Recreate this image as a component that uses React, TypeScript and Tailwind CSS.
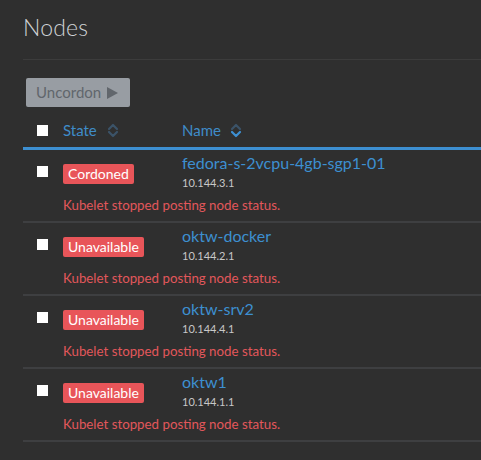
import { useState } from "react";

type Node = {
  name: string;
  ip: string;
  state: "Cordoned" | "Unavailable";
  message: string;
};

const nodes: Node[] = [
  { name: "fedora-s-2vcpu-4gb-sgp1-01", ip: "10.144.3.1", state: "Cordoned", message: "Kubelet stopped posting node status." },
  { name: "oktw-docker", ip: "10.144.2.1", state: "Unavailable", message: "Kubelet stopped posting node status." },
  { name: "oktw-srv2", ip: "10.144.4.1", state: "Unavailable", message: "Kubelet stopped posting node status." },
  { name: "oktw1", ip: "10.144.1.1", state: "Unavailable", message: "Kubelet stopped posting node status." },
];

// up/down chevrons; `active` lights one of them
function SortIcon({ active }: { active?: "up" | "down" }) {
  const dim = "#3b5368";
  const lit = "#3d8fd1";
  return (
    <svg width="12" height="15" viewBox="0 0 12 15" className="shrink-0">
      <path d="M2 6 L6 2 L10 6" fill="none" stroke={active === "up" ? lit : dim} strokeWidth="2.2" strokeLinecap="round" strokeLinejoin="round" />
      <path d="M2 9 L6 13 L10 9" fill="none" stroke={active === "down" ? lit : dim} strokeWidth="2.2" strokeLinecap="round" strokeLinejoin="round" />
    </svg>
  );
}

function Box() {
  return <span className="block w-[11px] h-[11px] bg-white" />;
}

export default function App() {
  const [rows] = useState(nodes);

  return (
    <div className="min-h-[460px] bg-[#2f2f2f] pl-[23px] pt-[12px] overflow-hidden" style={{ fontFamily: "Lato, 'Noto Sans', sans-serif" }}>
      <h1 className="text-[23px] leading-[30px] font-light text-[#d0d3d6] tracking-[0.2px]">Nodes</h1>
      <div className="mt-[17px] h-[1px] bg-[#3c3c3c]" />

      {/* bulk actions */}
      <div className="pt-[18px] pl-[3px]">
        <button type="button" className="flex items-center gap-[6px] h-[29px] w-[104px] pl-[10px] rounded-[2px] bg-[#989da3] text-[#61666c] text-[15px]">
          Uncordon
          <svg width="11" height="12" viewBox="0 0 11 12"><path d="M0 0 L11 6 L0 12 Z" fill="#61666c" /></svg>
        </button>
      </div>

      {/* header */}
      <div className="flex items-center h-[40px] mt-[3px] pt-[4px] text-[15px] text-[#3f8cc9] border-b-[3px] border-[#3d8fd1]">
        <div className="w-[40px] pl-[14px]"><Box /></div>
        <div className="w-[119px] flex items-center gap-[10px]">State <SortIcon /></div>
        <div className="flex items-center gap-[9px]">Name <SortIcon active="down" /></div>
      </div>

      {rows.map((n) => (
        <div key={n.name} className="pt-[3px] pb-[8px] border-b-2 border-[#3e3f41]">
          <div className="flex items-center">
            <div className="w-[40px] pl-[14px] -mt-[3px]"><Box /></div>
            <div className="w-[119px]">
              <span className="inline-block h-[20px] leading-[20px] px-[5px] rounded-[2px] bg-[#e85559] text-white text-[14px]">{n.state}</span>
            </div>
            <div>
              <div className="text-[16px] leading-[20px] text-[#3d8fd1]">{n.name}</div>
              <div className="text-[11px] leading-[19px] text-[#c8c8c8]">{n.ip}</div>
            </div>
          </div>
          <div className="pl-[40px] mt-[5px] text-[13.3px] leading-[16px] text-[#e2575b]">{n.message}</div>
        </div>
      ))}
    </div>
  );
}
